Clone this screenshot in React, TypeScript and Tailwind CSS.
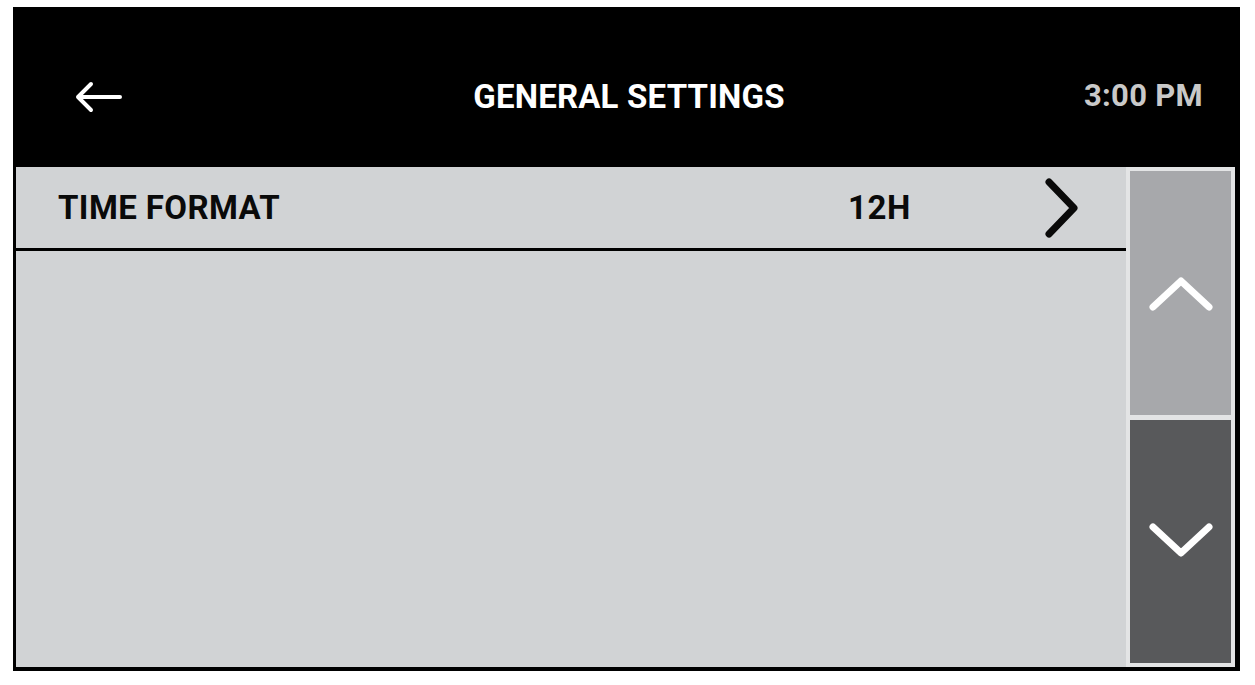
import React from 'react';

const font = { fontFamily: 'Roboto, "Liberation Sans", sans-serif' };

const ScrollButton = ({ dir, className }: { dir: 'up' | 'down'; className: string }) => (
  <button className={`flex-1 flex items-center justify-center ${className}`}>
    <svg width="64" height="40" viewBox="0 0 64 40" fill="none">
      <path
        d={dir === 'up' ? 'M4 34 L32 8 L60 34' : 'M4 6 L32 32 L60 6'}
        stroke="white"
        strokeWidth="7"
        strokeLinecap="round"
        strokeLinejoin="round"
      />
    </svg>
  </button>
);

export default function App() {
  return (
    <div className="w-full h-[685px] bg-white pt-[7px] pl-[13px]" style={font}>
      <div className="w-[1227px] h-[664px] bg-black flex flex-col pl-[3px] pr-[5px] pb-[4px]">
        {/* header */}
        <div className="h-[160px] flex items-center justify-between pt-[19px] pl-[58px] pr-[32px] relative">
          <svg width="48" height="32" viewBox="0 0 48 32" fill="none">
            <path d="M46 16 H4 M17 3 L4 16 L17 29" stroke="white" strokeWidth="4" strokeLinecap="round" strokeLinejoin="round" />
          </svg>
          <h1 className="absolute left-[7px] right-0 top-[19px] bottom-0 flex items-center justify-center text-white font-bold text-[33px] tracking-[0.2px] pointer-events-none">
            GENERAL SETTINGS
          </h1>
          <span className="text-[#c9c9c9] font-bold text-[31px] tracking-[0.3px]">3:00 PM</span>
        </div>

        {/* body */}
        <div className="flex-1 flex bg-[#d1d3d5]">
          <div className="flex-1">
            <div className="h-[84px] flex items-center border-b-[3px] border-black pl-[42px] pr-[44px]">
              <span className="font-bold text-[33px] tracking-[0.4px] text-[#0a0a0a]">TIME FORMAT</span>
              <span className="ml-auto font-bold text-[33px] tracking-[0.6px] text-[#0a0a0a] mr-[131px]">12H</span>
              <svg width="40" height="64" viewBox="0 0 40 64" fill="none">
                <path d="M7 6 L32 32 L7 58" stroke="#0a0a0a" strokeWidth="7" strokeLinecap="round" strokeLinejoin="round" />
              </svg>
            </div>
          </div>
          <div className="w-[109px] bg-[#e3e4e5] p-[4px] flex flex-col gap-[5px]">
            <ScrollButton dir="up" className="bg-[#a7a8ab]" />
            <ScrollButton dir="down" className="bg-[#58595b]" />
          </div>
        </div>
      </div>
    </div>
  );
}
